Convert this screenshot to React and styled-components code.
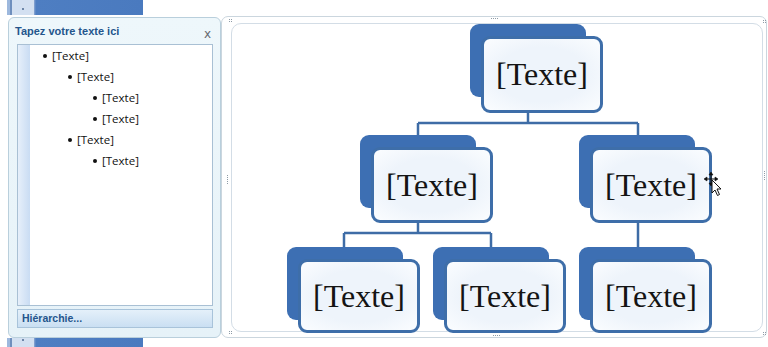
import React from 'react';
import styled, { createGlobalStyle } from 'styled-components';

const GlobalStyle = createGlobalStyle`
  html, body {
    margin: 0;
    padding: 0;
    background: #ffffff;
  }
  body {
    font-family: "Open Sans", "Liberation Sans", sans-serif;
  }
`;

const Stage = styled.div`
  display: flex;
  width: 768px;
  height: 347px;
  background: #ffffff;
  overflow: hidden;
`;

const LeftColumn = styled.div`
  display: flex;
  flex-direction: column;
  width: 214px;
  margin-left: 7px;
`;

const WordStrip = styled.div`
  position: relative;
  width: 136px;
  height: ${(p) => p.h}px;
  margin-top: ${(p) => (p.bottom ? 'auto' : '0')};
  background: linear-gradient(
    to right,
    #9db8dd 0,
    #9db8dd 3px,
    #6f8fbd 3px,
    #6f8fbd 5px,
    #d3e0f1 5px,
    #d3e0f1 27px,
    #8ea9d3 27px,
    #4e7ec2 29px,
    #4a7abf 100%
  );

  &::after {
    content: '';
    position: absolute;
    left: 15px;
    top: ${(p) => (p.bottom ? 1 : 8)}px;
    width: 2px;
    height: 2px;
    background: #6d86a8;
  }
`;

const Pane = styled.div`
  display: flex;
  flex-direction: column;
  width: 213px;
  height: 321px;
  margin-top: 2px;
  margin-left: 1px;
  box-sizing: border-box;
  background: linear-gradient(#eef7fb, #e6f2f8);
  border: 1px solid #b9cfdc;
  border-radius: 6px;
  padding: 0 7px 9px 8px;
`;

const PaneHeader = styled.div`
  display: flex;
  align-items: center;
  justify-content: space-between;
  height: 26px;
`;

const PaneTitle = styled.span`
  margin-left: -2px;
  font-family: "Liberation Sans", Arial, sans-serif;
  font-weight: bold;
  font-size: 11px;
  color: #24558c;
`;

const CloseButton = styled.span`
  margin-right: 2px;
  margin-top: 5px;
  font-family: "DejaVu Sans", sans-serif;
  font-size: 12px;
  color: #666a70;
`;

const TextArea = styled.div`
  display: flex;
  flex: 1;
  background: #ffffff;
  border: 1px solid #a9c0d4;
`;

const Stripe = styled.div`
  width: 12px;
  background: linear-gradient(to right, #e6effa, #c9dcf3);
`;

const Outline = styled.ul`
  list-style: none;
  margin: 0;
  padding: 0;
`;

const Item = styled.li`
  position: relative;
  height: 21px;
  line-height: 21px;
  padding-left: ${(p) => 22 + p.level * 25}px;
  font-family: "Open Sans", sans-serif;
  font-size: 11.5px;
  color: #111111;

  &::before {
    content: '';
    position: absolute;
    left: ${(p) => 13 + p.level * 25}px;
    top: 9px;
    width: 4px;
    height: 4px;
    border-radius: 50%;
    background: #111111;
  }
`;

const HierButton = styled.div`
  height: 17px;
  margin-top: 3px;
  padding-left: 4px;
  line-height: 17px;
  background: linear-gradient(#e4f0fa, #cadff2);
  border: 1px solid #a8c3da;
  font-family: "Liberation Sans", Arial, sans-serif;
  font-weight: bold;
  font-size: 10.5px;
  color: #24558c;
`;

const Canvas = styled.div`
  position: relative;
  display: flex;
  width: 546px;
  height: 322px;
  margin-top: 16px;
  box-sizing: border-box;
  padding: 6px 3px 5px 9px;
  border: 1px solid #cbd6de;
  border-radius: 7px;
`;

const Frame = styled.div`
  position: relative;
  flex: 1;
  border: 1px solid #d3dde6;
  border-radius: 10px;
`;

const Handle = styled.span`
  position: absolute;
  left: ${(p) => p.x}px;
  top: ${(p) => p.y}px;
  width: ${(p) => p.w}px;
  height: ${(p) => p.h}px;
  background-image: radial-gradient(circle at 0.5px 0.5px, #8e9ba6 0.5px, transparent 0.6px);
  background-size: 2px 2px;
`;

const Connectors = styled.svg`
  position: absolute;
  left: 0;
  top: 0;
  overflow: visible;
`;

const Node = styled.div`
  position: absolute;
  left: ${(p) => p.x}px;
  top: ${(p) => p.y}px;
  display: grid;
`;

const Back = styled.div`
  grid-area: 1 / 1;
  width: 116px;
  height: 73px;
  background: #3d6fb3;
  border-radius: 9px;
`;

const Front = styled.div`
  grid-area: 1 / 1;
  display: flex;
  align-items: center;
  justify-content: center;
  width: 122px;
  height: ${(p) => p.h}px;
  margin-left: 11px;
  margin-top: 12px;
  box-sizing: border-box;
  background: radial-gradient(ellipse at center, #eef4fb 55%, #fbfdff 100%);
  border: 3px solid #3e6ea9;
  border-radius: 9px;
  font-family: "Liberation Serif", "Times New Roman", serif;
  font-size: 32px;
  color: #141414;
`;

const Cursor = styled.svg`
  position: absolute;
  left: ${(p) => p.x}px;
  top: ${(p) => p.y}px;
`;

const outline = [
  { level: 0, text: '[Texte]' },
  { level: 1, text: '[Texte]' },
  { level: 2, text: '[Texte]' },
  { level: 2, text: '[Texte]' },
  { level: 1, text: '[Texte]' },
  { level: 2, text: '[Texte]' },
];

// back box corner, relative to the frame
const nodes = [
  { x: 238, y: 0, h: 77 },
  { x: 128, y: 111, h: 76 },
  { x: 347, y: 111, h: 76 },
  { x: 55, y: 223, h: 74 },
  { x: 201, y: 223, h: 74 },
  { x: 347, y: 223, h: 74 },
];

const lines = [
  'M296 73 V99',
  'M186 99 H406',
  'M186 99 V112',
  'M406 99 V112',
  'M186 196 V209',
  'M112 209 H259',
  'M112 209 V224',
  'M259 209 V224',
  'M406 196 V224',
];

const handles = [
  { x: 7, y: 2, w: 4, h: 4 },
  { x: 269, y: 1, w: 8, h: 2 },
  { x: 541, y: 3, w: 4, h: 4 },
  { x: 5, y: 158, w: 2, h: 10 },
  { x: 542, y: 154, w: 2, h: 10 },
  { x: 7, y: 314, w: 4, h: 4 },
  { x: 271, y: 318, w: 8, h: 2 },
  { x: 541, y: 315, w: 4, h: 4 },
];

const App = () => (
  <>
    <GlobalStyle />
    <Stage>
      <LeftColumn>
        <WordStrip h={15} />
        <Pane>
          <PaneHeader>
            <PaneTitle>Tapez votre texte ici</PaneTitle>
            <CloseButton>x</CloseButton>
          </PaneHeader>
          <TextArea>
            <Stripe />
            <Outline>
              {outline.map((it, i) => (
                <Item key={i} level={it.level}>
                  {it.text}
                </Item>
              ))}
            </Outline>
          </TextArea>
          <HierButton>Hiérarchie...</HierButton>
        </Pane>
        <WordStrip h={9} bottom />
      </LeftColumn>
      <Canvas>
        {handles.map((h, i) => (
          <Handle key={i} {...h} />
        ))}
        <Frame>
          <Connectors width="532" height="309">
            {lines.map((d, i) => (
              <path key={i} d={d} stroke="#3e6ca6" strokeWidth="2.5" fill="none" />
            ))}
          </Connectors>
          {nodes.map((n, i) => (
            <Node key={i} x={n.x} y={n.y}>
              <Back />
              <Front h={n.h}>[Texte]</Front>
            </Node>
          ))}
          <Cursor x={471} y={147} width="22" height="26" viewBox="0 0 22 26">
            <g stroke="#111" strokeWidth="1.2" fill="#111">
              <path d="M2 8 H14 M8 2 V14" fill="none" />
              <path d="M1 8 L4 6 L4 10 Z M15 8 L12 6 L12 10 Z M8 1 L6 4 L10 4 Z M8 15 L6 12 L10 12 Z" strokeWidth="0.6" />
            </g>
            <path
              d="M9 9 L9 22 L12 19 L14.5 24.5 L16.5 23.5 L14 18 L18 18 Z"
              fill="#fff"
              stroke="#111"
              strokeWidth="1"
              strokeLinejoin="round"
            />
          </Cursor>
        </Frame>
      </Canvas>
    </Stage>
  </>
);

export default App;
